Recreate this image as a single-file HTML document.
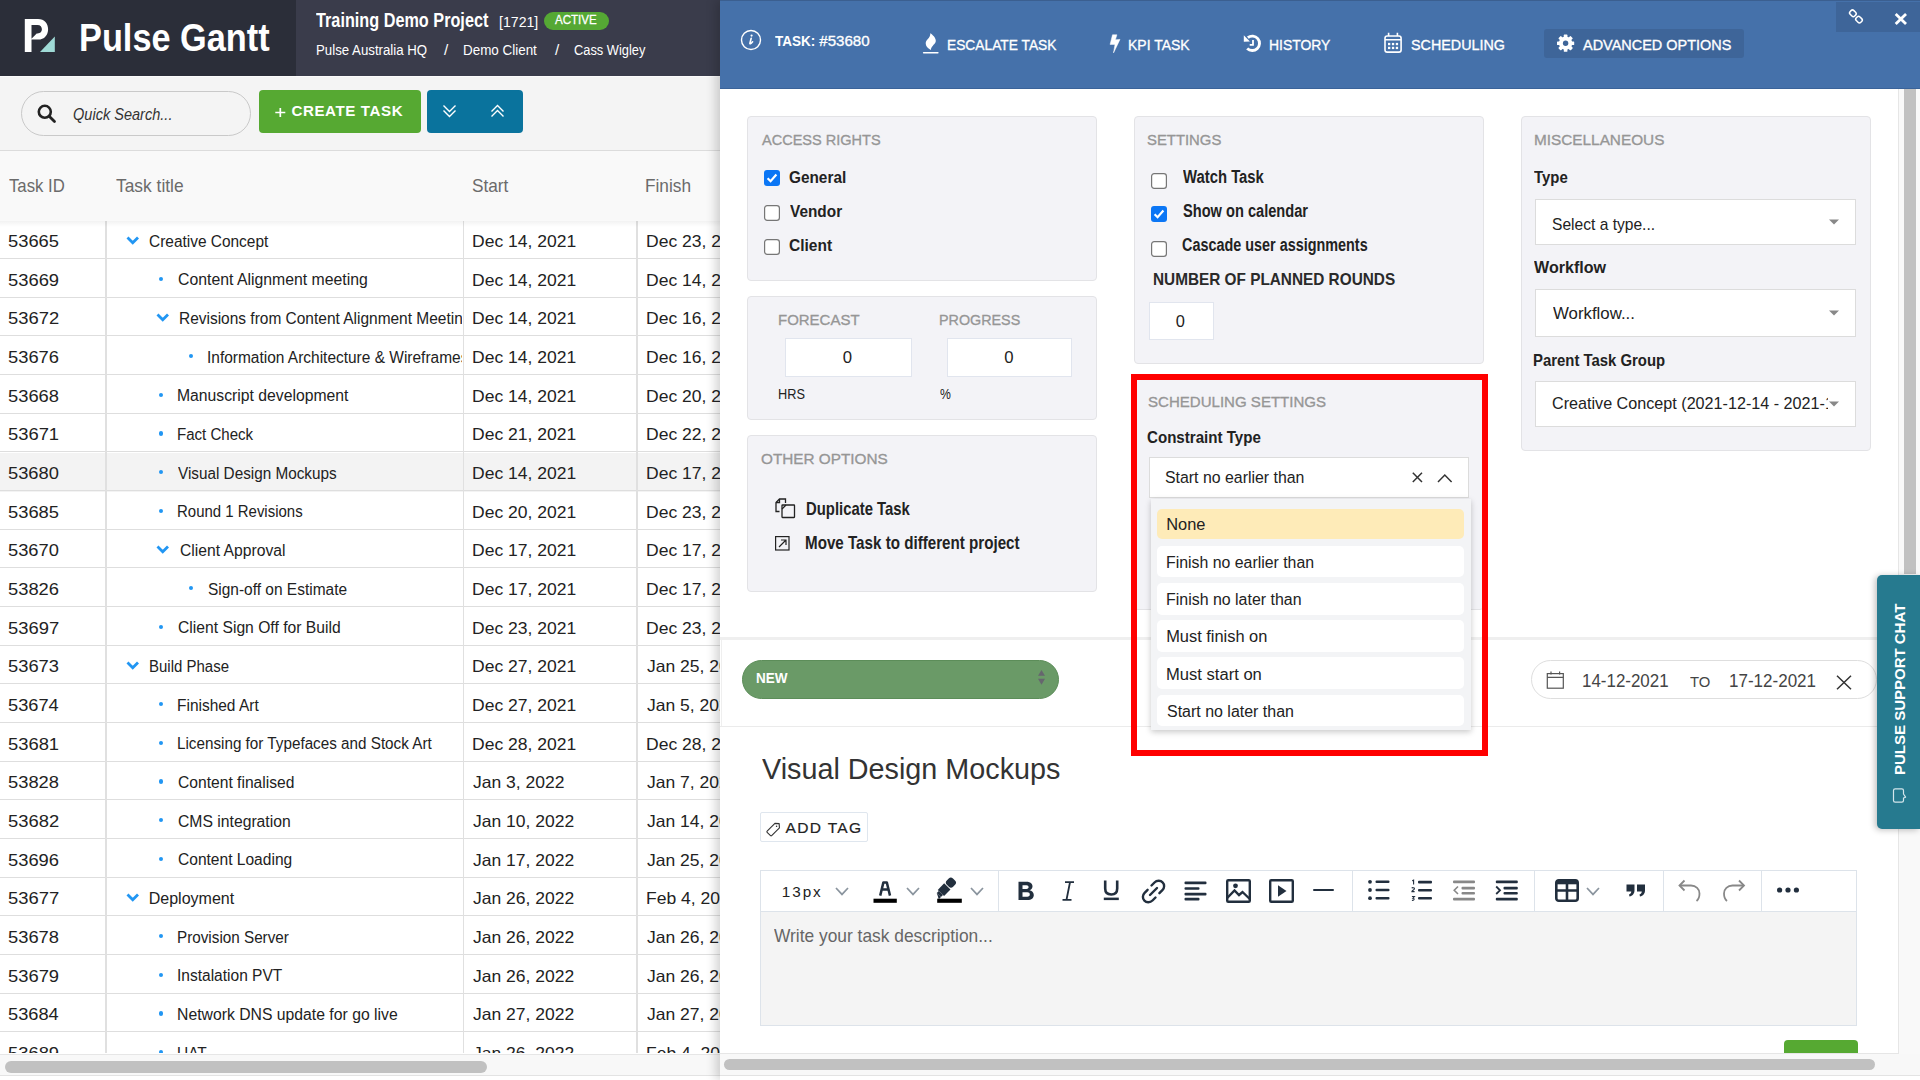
<!DOCTYPE html><html><head><meta charset="utf-8"><style>
html,body{margin:0;padding:0;width:1920px;height:1080px;overflow:hidden;background:#fff;font-family:"Liberation Sans",sans-serif;}
.t{position:absolute;line-height:1;white-space:nowrap;transform-origin:0 0;}
svg{overflow:visible}
</style></head><body>
<div style="position:absolute;left:0px;top:0px;width:296px;height:76px;background:#2b2e39"></div>
<div style="position:absolute;left:296px;top:0px;width:424px;height:76px;background:#3a3c4b"></div>
<svg style="position:absolute;left:20px;top:15px;" width="40" height="40" viewBox="0 0 40 40"><path d="M4.8 3.9H18C24.5 3.9 28.1 8.5 28.1 14.2C28.1 20 24.5 24.6 18 24.6H11.5V37H4.8Z M11.5 10H17.5C20.5 10 21.9 12 21.9 14.3C21.9 16.5 20.5 18.5 17.5 18.5H16.7L11.5 23.7Z" fill="#fff" fill-rule="evenodd"/><path d="M34.8 21.5V37H20Z" fill="#9fdad6"/></svg>
<div class="t" style="left:78.70px;top:17.78px;font-size:39.24px;font-weight:bold;font-style:normal;color:#fff;transform:scaleX(0.8745);">Pulse Gantt</div>
<div class="t" style="left:316.42px;top:10.64px;font-size:19.33px;font-weight:bold;font-style:normal;color:#fff;transform:scaleX(0.8402);">Training Demo Project</div>
<div class="t" style="left:498.70px;top:14.08px;font-size:15.26px;font-weight:normal;font-style:normal;color:#fff;transform:scaleX(0.9265);">[1721]</div>
<div style="position:absolute;left:544px;top:12px;width:65px;height:18px;background:#55a834;border-radius:9px"></div>
<div class="t" style="left:555.48px;top:14.25px;font-size:12.94px;font-weight:normal;font-style:normal;color:#fff;transform:scaleX(0.8929);-webkit-text-stroke:0.28px #fff;">ACTIVE</div>
<div class="t" style="left:315.51px;top:42.38px;font-size:15.26px;font-weight:normal;font-style:normal;color:#fff;transform:scaleX(0.8683);">Pulse Australia HQ</div>
<div class="t" style="left:444.00px;top:42.38px;font-size:15.26px;font-weight:normal;font-style:normal;color:#fff;">/</div>
<div class="t" style="left:462.90px;top:42.38px;font-size:15.26px;font-weight:normal;font-style:normal;color:#fff;transform:scaleX(0.8800);">Demo Client</div>
<div class="t" style="left:555.00px;top:42.38px;font-size:15.26px;font-weight:normal;font-style:normal;color:#fff;">/</div>
<div class="t" style="left:574.14px;top:42.38px;font-size:15.26px;font-weight:normal;font-style:normal;color:#fff;transform:scaleX(0.8417);">Cass Wigley</div>
<div style="position:absolute;left:0px;top:76px;width:720px;height:74px;background:#f4f4f4"></div>
<div style="position:absolute;left:0px;top:76px;width:720px;height:1px;background:#fbfbfb"></div>
<div style="position:absolute;left:0px;top:150px;width:720px;height:1px;background:#dcdcdc"></div>
<div style="position:absolute;left:21px;top:91px;width:230px;height:45px;box-sizing:border-box;border:1.5px solid #c9c9c9;border-radius:23px;background:#f4f4f4"></div>
<svg style="position:absolute;left:37px;top:104px;" width="20" height="20" viewBox="0 0 20 20"><circle cx="7.8" cy="7.8" r="6" fill="none" stroke="#222" stroke-width="2.6"/><path d="M12.2 12.2L17.5 17.5" stroke="#222" stroke-width="2.8" stroke-linecap="round"/></svg>
<div class="t" style="left:73.29px;top:106.85px;font-size:16.72px;font-weight:normal;font-style:italic;color:#333;transform:scaleX(0.8708);">Quick Search...</div>
<div style="position:absolute;left:259px;top:90px;width:162px;height:43px;background:#56a932;border-radius:4px"></div>
<svg style="position:absolute;left:274px;top:106px;" width="14" height="14" viewBox="0 0 14 14"><path d="M1.3 6.5H11.3M6.3 2V11" stroke="#fff" stroke-width="1.7"/></svg>
<div class="t" style="left:291.38px;top:103.00px;font-size:15.12px;font-weight:bold;font-style:normal;color:#fff;letter-spacing:0.610px;">CREATE TASK</div>
<div style="position:absolute;left:427px;top:90px;width:96px;height:43px;background:#0a739d;border-radius:4px"></div>
<svg style="position:absolute;left:442px;top:104px;" width="16" height="14" viewBox="0 0 16 14"><path d="M1.5 1.5L7.5 7.5L13.5 1.5M1.5 6.5L7.5 12.5L13.5 6.5" fill="none" stroke="#fff" stroke-width="1.4"/></svg>
<svg style="position:absolute;left:490px;top:104px;" width="16" height="14" viewBox="0 0 16 14"><path d="M1.5 7.5L7.5 1.5L13.5 7.5M1.5 12.5L7.5 6.5L13.5 12.5" fill="none" stroke="#fff" stroke-width="1.4"/></svg>
<div style="position:absolute;left:0px;top:151px;width:720px;height:70px;background:#f9f9f9"></div>
<div class="t" style="left:8.63px;top:177.05px;font-size:18.60px;font-weight:normal;font-style:normal;color:#6b6b6b;transform:scaleX(0.9008);">Task ID</div>
<div class="t" style="left:115.62px;top:177.05px;font-size:18.60px;font-weight:normal;font-style:normal;color:#6b6b6b;transform:scaleX(0.9347);">Task title</div>
<div class="t" style="left:472.47px;top:177.05px;font-size:18.60px;font-weight:normal;font-style:normal;color:#6b6b6b;transform:scaleX(0.9263);">Start</div>
<div class="t" style="left:645.38px;top:177.05px;font-size:18.60px;font-weight:normal;font-style:normal;color:#6b6b6b;transform:scaleX(0.9278);">Finish</div>
<div style="position:absolute;left:0;top:221px;width:720px;height:832px;overflow:hidden">
<div style="position:absolute;left:0px;top:37.00px;width:720px;height:1px;background:#dedede"></div>
<div class="t" style="left:8.27px;top:11.92px;font-size:16.28px;font-weight:normal;font-style:normal;color:#222;transform:scaleX(1.1266);">53665</div>
<svg style="position:absolute;left:126px;top:14.5px;" width="14" height="10" viewBox="0 0 14 10"><path d="M1.5 1.5L6.75 6.8L12 1.5" fill="none" stroke="#2196f3" stroke-width="2.8"/></svg>
<div style="position:absolute;left:0;top:0.00px;width:462px;height:38.667px;overflow:hidden">
<div class="t" style="left:149.21px;top:11.52px;font-size:16.05px;font-weight:normal;font-style:normal;color:#222;transform:scaleX(0.9631);">Creative Concept</div>
</div>
<div class="t" style="left:471.56px;top:11.92px;font-size:16.28px;font-weight:normal;font-style:normal;color:#222;transform:scaleX(1.0770);">Dec 14, 2021</div>
<div class="t" style="left:645.56px;top:11.92px;font-size:16.28px;font-weight:normal;font-style:normal;color:#222;transform:scaleX(1.0770);">Dec 23, 2021</div>
<div style="position:absolute;left:0px;top:75.66px;width:720px;height:1px;background:#dedede"></div>
<div class="t" style="left:8.27px;top:50.59px;font-size:16.28px;font-weight:normal;font-style:normal;color:#222;transform:scaleX(1.1287);">53669</div>
<div style="position:absolute;left:158.90px;top:55.70px;width:4.2px;height:4.2px;border-radius:50%;background:#2196f3"></div>
<div style="position:absolute;left:0;top:38.67px;width:462px;height:38.667px;overflow:hidden">
<div class="t" style="left:177.69px;top:11.52px;font-size:16.05px;font-weight:normal;font-style:normal;color:#222;transform:scaleX(0.9862);">Content Alignment meeting</div>
</div>
<div class="t" style="left:471.56px;top:50.59px;font-size:16.28px;font-weight:normal;font-style:normal;color:#222;transform:scaleX(1.0770);">Dec 14, 2021</div>
<div class="t" style="left:645.56px;top:50.59px;font-size:16.28px;font-weight:normal;font-style:normal;color:#222;transform:scaleX(1.0770);">Dec 14, 2021</div>
<div style="position:absolute;left:0px;top:114.33px;width:720px;height:1px;background:#dedede"></div>
<div class="t" style="left:8.26px;top:89.25px;font-size:16.28px;font-weight:normal;font-style:normal;color:#222;transform:scaleX(1.1300);">53672</div>
<svg style="position:absolute;left:156px;top:91.834px;" width="14" height="10" viewBox="0 0 14 10"><path d="M1.5 1.5L6.75 6.8L12 1.5" fill="none" stroke="#2196f3" stroke-width="2.8"/></svg>
<div style="position:absolute;left:0;top:77.33px;width:462px;height:38.667px;overflow:hidden">
<div class="t" style="left:179.13px;top:11.52px;font-size:16.05px;font-weight:normal;font-style:normal;color:#222;transform:scaleX(0.9650);">Revisions from Content Alignment Meeting</div>
</div>
<div class="t" style="left:471.56px;top:89.25px;font-size:16.28px;font-weight:normal;font-style:normal;color:#222;transform:scaleX(1.0770);">Dec 14, 2021</div>
<div class="t" style="left:645.56px;top:89.25px;font-size:16.28px;font-weight:normal;font-style:normal;color:#222;transform:scaleX(1.0770);">Dec 16, 2021</div>
<div style="position:absolute;left:0px;top:153.00px;width:720px;height:1px;background:#dedede"></div>
<div class="t" style="left:8.27px;top:127.92px;font-size:16.28px;font-weight:normal;font-style:normal;color:#222;transform:scaleX(1.1274);">53676</div>
<div style="position:absolute;left:188.50px;top:133.03px;width:4.2px;height:4.2px;border-radius:50%;background:#2196f3"></div>
<div style="position:absolute;left:0;top:116.00px;width:462px;height:38.667px;overflow:hidden">
<div class="t" style="left:207.48px;top:11.52px;font-size:16.05px;font-weight:normal;font-style:normal;color:#222;transform:scaleX(0.9650);">Information Architecture &amp; Wireframes</div>
</div>
<div class="t" style="left:471.56px;top:127.92px;font-size:16.28px;font-weight:normal;font-style:normal;color:#222;transform:scaleX(1.0770);">Dec 14, 2021</div>
<div class="t" style="left:645.56px;top:127.92px;font-size:16.28px;font-weight:normal;font-style:normal;color:#222;transform:scaleX(1.0770);">Dec 16, 2021</div>
<div style="position:absolute;left:0px;top:191.67px;width:720px;height:1px;background:#dedede"></div>
<div class="t" style="left:8.27px;top:166.59px;font-size:16.28px;font-weight:normal;font-style:normal;color:#222;transform:scaleX(1.1270);">53668</div>
<div style="position:absolute;left:158.90px;top:171.70px;width:4.2px;height:4.2px;border-radius:50%;background:#2196f3"></div>
<div style="position:absolute;left:0;top:154.67px;width:462px;height:38.667px;overflow:hidden">
<div class="t" style="left:177.21px;top:11.52px;font-size:16.05px;font-weight:normal;font-style:normal;color:#222;transform:scaleX(0.9816);">Manuscript development</div>
</div>
<div class="t" style="left:471.56px;top:166.59px;font-size:16.28px;font-weight:normal;font-style:normal;color:#222;transform:scaleX(1.0770);">Dec 14, 2021</div>
<div class="t" style="left:645.56px;top:166.59px;font-size:16.28px;font-weight:normal;font-style:normal;color:#222;transform:scaleX(1.0770);">Dec 20, 2021</div>
<div style="position:absolute;left:0px;top:230.33px;width:720px;height:1px;background:#dedede"></div>
<div class="t" style="left:8.26px;top:205.25px;font-size:16.28px;font-weight:normal;font-style:normal;color:#222;transform:scaleX(1.1295);">53671</div>
<div style="position:absolute;left:158.90px;top:210.37px;width:4.2px;height:4.2px;border-radius:50%;background:#2196f3"></div>
<div style="position:absolute;left:0;top:193.34px;width:462px;height:38.667px;overflow:hidden">
<div class="t" style="left:177.26px;top:11.52px;font-size:16.05px;font-weight:normal;font-style:normal;color:#222;transform:scaleX(0.9393);">Fact Check</div>
</div>
<div class="t" style="left:471.56px;top:205.25px;font-size:16.28px;font-weight:normal;font-style:normal;color:#222;transform:scaleX(1.0770);">Dec 21, 2021</div>
<div class="t" style="left:645.56px;top:205.25px;font-size:16.28px;font-weight:normal;font-style:normal;color:#222;transform:scaleX(1.0770);">Dec 22, 2021</div>
<div style="position:absolute;left:0px;top:232.00px;width:720px;height:38.667px;background:#f3f3f3"></div>
<div style="position:absolute;left:0px;top:269.00px;width:720px;height:1px;background:#dedede"></div>
<div class="t" style="left:8.27px;top:243.92px;font-size:16.28px;font-weight:normal;font-style:normal;color:#222;transform:scaleX(1.1254);">53680</div>
<div style="position:absolute;left:158.90px;top:249.04px;width:4.2px;height:4.2px;border-radius:50%;background:#2196f3"></div>
<div style="position:absolute;left:0;top:232.00px;width:462px;height:38.667px;overflow:hidden">
<div class="t" style="left:178.44px;top:11.52px;font-size:16.05px;font-weight:normal;font-style:normal;color:#222;transform:scaleX(0.9538);">Visual Design Mockups</div>
</div>
<div class="t" style="left:471.56px;top:243.92px;font-size:16.28px;font-weight:normal;font-style:normal;color:#222;transform:scaleX(1.0770);">Dec 14, 2021</div>
<div class="t" style="left:645.56px;top:243.92px;font-size:16.28px;font-weight:normal;font-style:normal;color:#222;transform:scaleX(1.0770);">Dec 17, 2021</div>
<div style="position:absolute;left:0px;top:307.67px;width:720px;height:1px;background:#dedede"></div>
<div class="t" style="left:8.27px;top:282.59px;font-size:16.28px;font-weight:normal;font-style:normal;color:#222;transform:scaleX(1.1266);">53685</div>
<div style="position:absolute;left:158.90px;top:287.70px;width:4.2px;height:4.2px;border-radius:50%;background:#2196f3"></div>
<div style="position:absolute;left:0;top:270.67px;width:462px;height:38.667px;overflow:hidden">
<div class="t" style="left:177.27px;top:11.52px;font-size:16.05px;font-weight:normal;font-style:normal;color:#222;transform:scaleX(0.9337);">Round 1 Revisions</div>
</div>
<div class="t" style="left:471.56px;top:282.59px;font-size:16.28px;font-weight:normal;font-style:normal;color:#222;transform:scaleX(1.0770);">Dec 20, 2021</div>
<div class="t" style="left:645.56px;top:282.59px;font-size:16.28px;font-weight:normal;font-style:normal;color:#222;transform:scaleX(1.0770);">Dec 23, 2021</div>
<div style="position:absolute;left:0px;top:346.33px;width:720px;height:1px;background:#dedede"></div>
<div class="t" style="left:8.27px;top:321.26px;font-size:16.28px;font-weight:normal;font-style:normal;color:#222;transform:scaleX(1.1254);">53670</div>
<svg style="position:absolute;left:156px;top:323.836px;" width="14" height="10" viewBox="0 0 14 10"><path d="M1.5 1.5L6.75 6.8L12 1.5" fill="none" stroke="#2196f3" stroke-width="2.8"/></svg>
<div style="position:absolute;left:0;top:309.34px;width:462px;height:38.667px;overflow:hidden">
<div class="t" style="left:179.60px;top:11.52px;font-size:16.05px;font-weight:normal;font-style:normal;color:#222;transform:scaleX(0.9780);">Client Approval</div>
</div>
<div class="t" style="left:471.56px;top:321.26px;font-size:16.28px;font-weight:normal;font-style:normal;color:#222;transform:scaleX(1.0770);">Dec 17, 2021</div>
<div class="t" style="left:645.56px;top:321.26px;font-size:16.28px;font-weight:normal;font-style:normal;color:#222;transform:scaleX(1.0770);">Dec 17, 2021</div>
<div style="position:absolute;left:0px;top:385.00px;width:720px;height:1px;background:#dedede"></div>
<div class="t" style="left:8.27px;top:359.92px;font-size:16.28px;font-weight:normal;font-style:normal;color:#222;transform:scaleX(1.1274);">53826</div>
<div style="position:absolute;left:188.50px;top:365.04px;width:4.2px;height:4.2px;border-radius:50%;background:#2196f3"></div>
<div style="position:absolute;left:0;top:348.00px;width:462px;height:38.667px;overflow:hidden">
<div class="t" style="left:208.20px;top:11.52px;font-size:16.05px;font-weight:normal;font-style:normal;color:#222;transform:scaleX(0.9652);">Sign-off on Estimate</div>
</div>
<div class="t" style="left:471.56px;top:359.92px;font-size:16.28px;font-weight:normal;font-style:normal;color:#222;transform:scaleX(1.0770);">Dec 17, 2021</div>
<div class="t" style="left:645.56px;top:359.92px;font-size:16.28px;font-weight:normal;font-style:normal;color:#222;transform:scaleX(1.0770);">Dec 17, 2021</div>
<div style="position:absolute;left:0px;top:423.67px;width:720px;height:1px;background:#dedede"></div>
<div class="t" style="left:8.26px;top:398.59px;font-size:16.28px;font-weight:normal;font-style:normal;color:#222;transform:scaleX(1.1300);">53697</div>
<div style="position:absolute;left:158.90px;top:403.70px;width:4.2px;height:4.2px;border-radius:50%;background:#2196f3"></div>
<div style="position:absolute;left:0;top:386.67px;width:462px;height:38.667px;overflow:hidden">
<div class="t" style="left:177.70px;top:11.52px;font-size:16.05px;font-weight:normal;font-style:normal;color:#222;transform:scaleX(0.9779);">Client Sign Off for Build</div>
</div>
<div class="t" style="left:471.56px;top:398.59px;font-size:16.28px;font-weight:normal;font-style:normal;color:#222;transform:scaleX(1.0770);">Dec 23, 2021</div>
<div class="t" style="left:645.56px;top:398.59px;font-size:16.28px;font-weight:normal;font-style:normal;color:#222;transform:scaleX(1.0770);">Dec 23, 2021</div>
<div style="position:absolute;left:0px;top:462.33px;width:720px;height:1px;background:#dedede"></div>
<div class="t" style="left:8.27px;top:437.26px;font-size:16.28px;font-weight:normal;font-style:normal;color:#222;transform:scaleX(1.1274);">53673</div>
<svg style="position:absolute;left:126px;top:439.837px;" width="14" height="10" viewBox="0 0 14 10"><path d="M1.5 1.5L6.75 6.8L12 1.5" fill="none" stroke="#2196f3" stroke-width="2.8"/></svg>
<div style="position:absolute;left:0;top:425.34px;width:462px;height:38.667px;overflow:hidden">
<div class="t" style="left:148.77px;top:11.52px;font-size:16.05px;font-weight:normal;font-style:normal;color:#222;transform:scaleX(0.9352);">Build Phase</div>
</div>
<div class="t" style="left:471.56px;top:437.26px;font-size:16.28px;font-weight:normal;font-style:normal;color:#222;transform:scaleX(1.0770);">Dec 27, 2021</div>
<div class="t" style="left:646.72px;top:437.26px;font-size:16.28px;font-weight:normal;font-style:normal;color:#222;transform:scaleX(1.0770);">Jan 25, 2022</div>
<div style="position:absolute;left:0px;top:501.00px;width:720px;height:1px;background:#dedede"></div>
<div class="t" style="left:8.27px;top:475.92px;font-size:16.28px;font-weight:normal;font-style:normal;color:#222;transform:scaleX(1.1212);">53674</div>
<div style="position:absolute;left:158.90px;top:481.04px;width:4.2px;height:4.2px;border-radius:50%;background:#2196f3"></div>
<div style="position:absolute;left:0;top:464.00px;width:462px;height:38.667px;overflow:hidden">
<div class="t" style="left:177.23px;top:11.52px;font-size:16.05px;font-weight:normal;font-style:normal;color:#222;transform:scaleX(0.9650);">Finished Art</div>
</div>
<div class="t" style="left:471.56px;top:475.92px;font-size:16.28px;font-weight:normal;font-style:normal;color:#222;transform:scaleX(1.0770);">Dec 27, 2021</div>
<div class="t" style="left:646.72px;top:475.92px;font-size:16.28px;font-weight:normal;font-style:normal;color:#222;transform:scaleX(1.0770);">Jan 5, 2022</div>
<div style="position:absolute;left:0px;top:539.67px;width:720px;height:1px;background:#dedede"></div>
<div class="t" style="left:8.26px;top:514.59px;font-size:16.28px;font-weight:normal;font-style:normal;color:#222;transform:scaleX(1.1295);">53681</div>
<div style="position:absolute;left:158.90px;top:519.70px;width:4.2px;height:4.2px;border-radius:50%;background:#2196f3"></div>
<div style="position:absolute;left:0;top:502.67px;width:462px;height:38.667px;overflow:hidden">
<div class="t" style="left:177.25px;top:11.52px;font-size:16.05px;font-weight:normal;font-style:normal;color:#222;transform:scaleX(0.9506);">Licensing for Typefaces and Stock Art</div>
</div>
<div class="t" style="left:471.56px;top:514.59px;font-size:16.28px;font-weight:normal;font-style:normal;color:#222;transform:scaleX(1.0770);">Dec 28, 2021</div>
<div class="t" style="left:645.56px;top:514.59px;font-size:16.28px;font-weight:normal;font-style:normal;color:#222;transform:scaleX(1.0770);">Dec 28, 2021</div>
<div style="position:absolute;left:0px;top:578.34px;width:720px;height:1px;background:#dedede"></div>
<div class="t" style="left:8.27px;top:553.26px;font-size:16.28px;font-weight:normal;font-style:normal;color:#222;transform:scaleX(1.1270);">53828</div>
<div style="position:absolute;left:158.90px;top:558.37px;width:4.2px;height:4.2px;border-radius:50%;background:#2196f3"></div>
<div style="position:absolute;left:0;top:541.34px;width:462px;height:38.667px;overflow:hidden">
<div class="t" style="left:177.70px;top:11.52px;font-size:16.05px;font-weight:normal;font-style:normal;color:#222;transform:scaleX(0.9746);">Content finalised</div>
</div>
<div class="t" style="left:472.72px;top:553.26px;font-size:16.28px;font-weight:normal;font-style:normal;color:#222;transform:scaleX(1.0770);">Jan 3, 2022</div>
<div class="t" style="left:646.72px;top:553.26px;font-size:16.28px;font-weight:normal;font-style:normal;color:#222;transform:scaleX(1.0770);">Jan 7, 2022</div>
<div style="position:absolute;left:0px;top:617.00px;width:720px;height:1px;background:#dedede"></div>
<div class="t" style="left:8.26px;top:591.92px;font-size:16.28px;font-weight:normal;font-style:normal;color:#222;transform:scaleX(1.1300);">53682</div>
<div style="position:absolute;left:158.90px;top:597.04px;width:4.2px;height:4.2px;border-radius:50%;background:#2196f3"></div>
<div style="position:absolute;left:0;top:580.00px;width:462px;height:38.667px;overflow:hidden">
<div class="t" style="left:177.70px;top:11.52px;font-size:16.05px;font-weight:normal;font-style:normal;color:#222;transform:scaleX(0.9806);">CMS integration</div>
</div>
<div class="t" style="left:472.72px;top:591.92px;font-size:16.28px;font-weight:normal;font-style:normal;color:#222;transform:scaleX(1.0770);">Jan 10, 2022</div>
<div class="t" style="left:646.72px;top:591.92px;font-size:16.28px;font-weight:normal;font-style:normal;color:#222;transform:scaleX(1.0770);">Jan 14, 2022</div>
<div style="position:absolute;left:0px;top:655.67px;width:720px;height:1px;background:#dedede"></div>
<div class="t" style="left:8.27px;top:630.59px;font-size:16.28px;font-weight:normal;font-style:normal;color:#222;transform:scaleX(1.1274);">53696</div>
<div style="position:absolute;left:158.90px;top:635.71px;width:4.2px;height:4.2px;border-radius:50%;background:#2196f3"></div>
<div style="position:absolute;left:0;top:618.67px;width:462px;height:38.667px;overflow:hidden">
<div class="t" style="left:177.71px;top:11.52px;font-size:16.05px;font-weight:normal;font-style:normal;color:#222;transform:scaleX(0.9705);">Content Loading</div>
</div>
<div class="t" style="left:472.72px;top:630.59px;font-size:16.28px;font-weight:normal;font-style:normal;color:#222;transform:scaleX(1.0770);">Jan 17, 2022</div>
<div class="t" style="left:646.72px;top:630.59px;font-size:16.28px;font-weight:normal;font-style:normal;color:#222;transform:scaleX(1.0770);">Jan 25, 2022</div>
<div style="position:absolute;left:0px;top:694.34px;width:720px;height:1px;background:#dedede"></div>
<div class="t" style="left:8.26px;top:669.26px;font-size:16.28px;font-weight:normal;font-style:normal;color:#222;transform:scaleX(1.1300);">53677</div>
<svg style="position:absolute;left:126px;top:671.839px;" width="14" height="10" viewBox="0 0 14 10"><path d="M1.5 1.5L6.75 6.8L12 1.5" fill="none" stroke="#2196f3" stroke-width="2.8"/></svg>
<div style="position:absolute;left:0;top:657.34px;width:462px;height:38.667px;overflow:hidden">
<div class="t" style="left:148.69px;top:11.52px;font-size:16.05px;font-weight:normal;font-style:normal;color:#222;">Deployment</div>
</div>
<div class="t" style="left:472.72px;top:669.26px;font-size:16.28px;font-weight:normal;font-style:normal;color:#222;transform:scaleX(1.0770);">Jan 26, 2022</div>
<div class="t" style="left:645.56px;top:669.26px;font-size:16.28px;font-weight:normal;font-style:normal;color:#222;transform:scaleX(1.0770);">Feb 4, 2022</div>
<div style="position:absolute;left:0px;top:733.00px;width:720px;height:1px;background:#dedede"></div>
<div class="t" style="left:8.27px;top:707.93px;font-size:16.28px;font-weight:normal;font-style:normal;color:#222;transform:scaleX(1.1270);">53678</div>
<div style="position:absolute;left:158.90px;top:713.04px;width:4.2px;height:4.2px;border-radius:50%;background:#2196f3"></div>
<div style="position:absolute;left:0;top:696.01px;width:462px;height:38.667px;overflow:hidden">
<div class="t" style="left:177.25px;top:11.52px;font-size:16.05px;font-weight:normal;font-style:normal;color:#222;transform:scaleX(0.9514);">Provision Server</div>
</div>
<div class="t" style="left:472.72px;top:707.93px;font-size:16.28px;font-weight:normal;font-style:normal;color:#222;transform:scaleX(1.0770);">Jan 26, 2022</div>
<div class="t" style="left:646.72px;top:707.93px;font-size:16.28px;font-weight:normal;font-style:normal;color:#222;transform:scaleX(1.0770);">Jan 26, 2022</div>
<div style="position:absolute;left:0px;top:771.67px;width:720px;height:1px;background:#dedede"></div>
<div class="t" style="left:8.27px;top:746.59px;font-size:16.28px;font-weight:normal;font-style:normal;color:#222;transform:scaleX(1.1287);">53679</div>
<div style="position:absolute;left:158.90px;top:751.71px;width:4.2px;height:4.2px;border-radius:50%;background:#2196f3"></div>
<div style="position:absolute;left:0;top:734.67px;width:462px;height:38.667px;overflow:hidden">
<div class="t" style="left:177.07px;top:11.52px;font-size:16.05px;font-weight:normal;font-style:normal;color:#222;transform:scaleX(0.9685);">Instalation PVT</div>
</div>
<div class="t" style="left:472.72px;top:746.59px;font-size:16.28px;font-weight:normal;font-style:normal;color:#222;transform:scaleX(1.0770);">Jan 26, 2022</div>
<div class="t" style="left:646.72px;top:746.59px;font-size:16.28px;font-weight:normal;font-style:normal;color:#222;transform:scaleX(1.0770);">Jan 26, 2022</div>
<div style="position:absolute;left:0px;top:810.34px;width:720px;height:1px;background:#dedede"></div>
<div class="t" style="left:8.27px;top:785.26px;font-size:16.28px;font-weight:normal;font-style:normal;color:#222;transform:scaleX(1.1212);">53684</div>
<div style="position:absolute;left:158.90px;top:790.37px;width:4.2px;height:4.2px;border-radius:50%;background:#2196f3"></div>
<div style="position:absolute;left:0;top:773.34px;width:462px;height:38.667px;overflow:hidden">
<div class="t" style="left:177.21px;top:11.52px;font-size:16.05px;font-weight:normal;font-style:normal;color:#222;transform:scaleX(0.9828);">Network DNS update for go live</div>
</div>
<div class="t" style="left:472.72px;top:785.26px;font-size:16.28px;font-weight:normal;font-style:normal;color:#222;transform:scaleX(1.0770);">Jan 27, 2022</div>
<div class="t" style="left:646.72px;top:785.26px;font-size:16.28px;font-weight:normal;font-style:normal;color:#222;transform:scaleX(1.0770);">Jan 27, 2022</div>
<div style="position:absolute;left:0px;top:849.00px;width:720px;height:1px;background:#dedede"></div>
<div class="t" style="left:8.27px;top:823.93px;font-size:16.28px;font-weight:normal;font-style:normal;color:#222;transform:scaleX(1.1287);">53689</div>
<div style="position:absolute;left:158.90px;top:829.04px;width:4.2px;height:4.2px;border-radius:50%;background:#2196f3"></div>
<div style="position:absolute;left:0;top:812.01px;width:462px;height:38.667px;overflow:hidden">
<div class="t" style="left:177.31px;top:11.52px;font-size:16.05px;font-weight:normal;font-style:normal;color:#222;transform:scaleX(0.9650);">UAT</div>
</div>
<div class="t" style="left:472.72px;top:823.93px;font-size:16.28px;font-weight:normal;font-style:normal;color:#222;transform:scaleX(1.0770);">Jan 26, 2022</div>
<div class="t" style="left:645.56px;top:823.93px;font-size:16.28px;font-weight:normal;font-style:normal;color:#222;transform:scaleX(1.0770);">Feb 4, 2022</div>
</div>
<div style="position:absolute;left:105px;top:221px;width:1.5px;height:832px;background:#e0e0e0"></div>
<div style="position:absolute;left:462.5px;top:221px;width:1.5px;height:832px;background:#e0e0e0"></div>
<div style="position:absolute;left:636px;top:221px;width:1.5px;height:832px;background:#e0e0e0"></div>
<div style="position:absolute;left:0px;top:221px;width:720px;height:6px;background:linear-gradient(#0000000d,#0000)"></div>
<div style="position:absolute;left:0px;top:1053.5px;width:720px;height:22.5px;background:#f8f8f8;border-top:1px solid #e6e6e6;border-bottom:1px solid #e3e3e3;box-sizing:border-box"></div>
<div style="position:absolute;left:0px;top:1076px;width:720px;height:4px;background:#fff"></div>
<div style="position:absolute;left:4.5px;top:1061px;width:482px;height:11.5px;background:#c1c1c1;border-radius:6px"></div>
<div style="position:absolute;left:720px;top:0;width:1200px;height:1080px;background:#fff;box-shadow:-4px 0 10px rgba(0,0,0,.18)"></div>
<div style="position:absolute;left:720px;top:0px;width:1200px;height:88.5px;background:#4571aa"></div>
<div style="position:absolute;left:720px;top:87.5px;width:1200px;height:1.2px;background:#3a6399"></div>
<div style="position:absolute;left:720px;top:0px;width:1200px;height:1px;background:#3b5f90"></div>
<svg style="position:absolute;left:736px;top:25px;" width="30" height="30" viewBox="0 0 30 30"><circle cx="15" cy="15" r="9.5" fill="none" stroke="#fff" stroke-width="1.4"/><circle cx="15.6" cy="10.6" r="1.1" fill="#fff"/><path d="M15.2 13.2L13.9 18.2C13.7 19 14.6 19.2 16.6 16.8" fill="none" stroke="#fff" stroke-width="1.6" stroke-linecap="round"/></svg>
<div class="t" style="left:774.85px;top:33.20px;font-size:15.12px;font-weight:bold;font-style:normal;color:#fff;transform:scaleX(0.8931);">TASK:</div>
<div class="t" style="left:819.24px;top:33.20px;font-size:15.12px;font-weight:normal;font-style:normal;color:#fff;-webkit-text-stroke:0.33px #fff;">#53680</div>
<svg style="position:absolute;left:915px;top:28px;" width="30" height="30" viewBox="0 0 30 30"><path d="M15.3 5.3C17.5 6.8 20.8 9.5 20.8 12.8C20.8 16 16.5 17.5 15.8 21.9C12.5 20.5 10.7 18 10.7 15.3C10.7 11.5 15.5 10.5 15.3 5.3Z" fill="#fff"/><rect x="7.9" y="23.9" width="15.7" height="1.5" rx="0.7" fill="#fff"/></svg>
<div class="t" style="left:947.27px;top:36.80px;font-size:15.12px;font-weight:normal;font-style:normal;color:#fff;transform:scaleX(0.9115);-webkit-text-stroke:0.33px #fff;">ESCALATE TASK</div>
<svg style="position:absolute;left:1100px;top:28px;" width="30" height="30" viewBox="0 0 30 30"><path d="M12.5 6.8L16.9 6.8L15.4 11.8L20 11.4L13.5 24.9L15 16.4L10.1 16.4Z" fill="#fff" stroke="#fff" stroke-width="0.5" stroke-linejoin="round"/></svg>
<div class="t" style="left:1128.45px;top:36.90px;font-size:15.12px;font-weight:normal;font-style:normal;color:#fff;transform:scaleX(0.9260);-webkit-text-stroke:0.33px #fff;">KPI TASK</div>
<svg style="position:absolute;left:1238px;top:28px;" width="30" height="30" viewBox="0 0 30 30"><path d="M9.84 9.68A7.2 7.2 0 1 1 9.2 20.4" fill="none" stroke="#fff" stroke-width="2.9"/><path d="M5.8 7.2L5.8 13.75L11.9 13.6Z" fill="#fff"/><path d="M15 11.9V16.8H11.7" fill="none" stroke="#fff" stroke-width="1.8"/></svg>
<div class="t" style="left:1269.46px;top:36.90px;font-size:15.12px;font-weight:normal;font-style:normal;color:#fff;transform:scaleX(0.9220);-webkit-text-stroke:0.33px #fff;">HISTORY</div>
<svg style="position:absolute;left:1378px;top:28px;" width="30" height="30" viewBox="0 0 30 30"><rect x="7" y="8" width="16.1" height="16.1" rx="2.2" fill="none" stroke="#fff" stroke-width="1.6"/><path d="M7 11.7H23.1M10.6 4.7V8M19.4 4.7V8" stroke="#fff" stroke-width="1.6"/><g fill="#fff"><rect x="10" y="14.9" width="2.3" height="2.3"/><rect x="13.9" y="14.9" width="2.3" height="2.3"/><rect x="17.8" y="14.9" width="2.3" height="2.3"/><rect x="10" y="18.8" width="2.3" height="2.3"/><rect x="13.9" y="18.8" width="2.3" height="2.3"/><rect x="17.8" y="18.8" width="2.3" height="2.3"/></g></svg>
<div class="t" style="left:1410.65px;top:36.90px;font-size:15.12px;font-weight:normal;font-style:normal;color:#fff;transform:scaleX(0.9486);-webkit-text-stroke:0.33px #fff;">SCHEDULING</div>
<div style="position:absolute;left:1544px;top:28.5px;width:200px;height:29px;background:#3e6599;border-radius:3px"></div>
<svg style="position:absolute;left:1550px;top:28px;" width="30" height="30" viewBox="0 0 30 30"><g transform="translate(15.6,15.2)"><circle r="6.6" fill="#fff"/><rect x="-1.8" y="-8.6" width="3.6" height="4" rx="0.6" fill="#fff" transform="rotate(0)"/><rect x="-1.8" y="-8.6" width="3.6" height="4" rx="0.6" fill="#fff" transform="rotate(45)"/><rect x="-1.8" y="-8.6" width="3.6" height="4" rx="0.6" fill="#fff" transform="rotate(90)"/><rect x="-1.8" y="-8.6" width="3.6" height="4" rx="0.6" fill="#fff" transform="rotate(135)"/><rect x="-1.8" y="-8.6" width="3.6" height="4" rx="0.6" fill="#fff" transform="rotate(180)"/><rect x="-1.8" y="-8.6" width="3.6" height="4" rx="0.6" fill="#fff" transform="rotate(225)"/><rect x="-1.8" y="-8.6" width="3.6" height="4" rx="0.6" fill="#fff" transform="rotate(270)"/><rect x="-1.8" y="-8.6" width="3.6" height="4" rx="0.6" fill="#fff" transform="rotate(315)"/><circle r="2.7" fill="#3e6599"/></g></svg>
<div class="t" style="left:1582.97px;top:36.90px;font-size:15.12px;font-weight:normal;font-style:normal;color:#fff;transform:scaleX(0.9567);-webkit-text-stroke:0.33px #fff;">ADVANCED OPTIONS</div>
<div style="position:absolute;left:1836px;top:2px;width:84px;height:30px;background:#3e6599"></div>
<svg style="position:absolute;left:1840px;top:0px;" width="40" height="40" viewBox="0 0 40 40"><g fill="none" stroke="#fff" stroke-width="1.5"><rect x="-3.2" y="-2.6" width="6.4" height="5.2" rx="2" transform="translate(12.9 13.3) rotate(45)"/><rect x="-3.2" y="-2.6" width="6.4" height="5.2" rx="2" transform="translate(19 19.6) rotate(45)"/></g></svg>
<svg style="position:absolute;left:1890px;top:9px;" width="20" height="20" viewBox="0 0 20 20"><path d="M6.7 6L15 14M15 6L6.7 14" stroke="#fff" stroke-width="2.8" stroke-linecap="square"/></svg>
<div style="position:absolute;left:720px;top:636.5px;width:1178px;height:3px;background:#efefef"></div>
<div style="position:absolute;left:720px;top:726px;width:1178px;height:1.2px;background:#ebebeb"></div>
<div style="position:absolute;left:720.5px;top:639px;width:1px;height:87px;background:#efefef"></div>
<div style="position:absolute;left:742.2px;top:659.6px;width:316.7px;height:39.3px;background:#6a9a67;border:1px solid #5c8d59;box-sizing:border-box;border-radius:20px"></div>
<div class="t" style="left:755.79px;top:670.26px;font-size:15.41px;font-weight:bold;font-style:normal;color:#fff;transform:scaleX(0.8769);">NEW</div>
<svg style="position:absolute;left:1030px;top:660px;" width="20" height="30" viewBox="0 0 20 30"><path d="M8 15.7L11.5 9.9L15 15.7Z M8 18.7L11.5 24.7L15 18.7Z" fill="#66666e"/></svg>
<div style="position:absolute;left:1530.7px;top:660px;width:346px;height:39px;border:1px solid #dedede;border-radius:20px;box-sizing:border-box;background:#fff"></div>
<svg style="position:absolute;left:1546px;top:671px;" width="19" height="18" viewBox="0 0 19 18"><g fill="none" stroke="#555" stroke-width="1.2"><rect x="1.3" y="2.6" width="16" height="14.6"/><path d="M1.3 6.3H17.3M5 0.5V3.5M13.6 0.5V3.5"/></g></svg>
<div class="t" style="left:1582.01px;top:671.81px;font-size:18.90px;font-weight:normal;font-style:normal;color:#444;transform:scaleX(0.8962);">14-12-2021</div>
<div class="t" style="left:1689.67px;top:676.11px;font-size:13.81px;font-weight:normal;font-style:normal;color:#444;transform:scaleX(1.0743);">TO</div>
<div class="t" style="left:1729.41px;top:671.81px;font-size:18.90px;font-weight:normal;font-style:normal;color:#444;transform:scaleX(0.9004);">17-12-2021</div>
<svg style="position:absolute;left:1836px;top:674.5px;" width="16" height="15" viewBox="0 0 16 15"><path d="M1 0.8L15 14.2M15 0.8L1 14.2" stroke="#333" stroke-width="1.5"/></svg>
<div style="position:absolute;left:747px;top:116px;width:350px;height:164.5px;background:#f3f3f7;border:1px solid #e3e3e6;border-radius:4px;box-sizing:border-box"></div>
<div style="position:absolute;left:747px;top:295.5px;width:350px;height:124.5px;background:#f3f3f7;border:1px solid #e3e3e6;border-radius:4px;box-sizing:border-box"></div>
<div style="position:absolute;left:747px;top:434.5px;width:350px;height:157.5px;background:#f3f3f7;border:1px solid #e3e3e6;border-radius:4px;box-sizing:border-box"></div>
<div style="position:absolute;left:1134px;top:116px;width:350px;height:247.5px;background:#f3f3f7;border:1px solid #e3e3e6;border-radius:4px;box-sizing:border-box"></div>
<div style="position:absolute;left:1134px;top:378px;width:350px;height:231.5px;background:#f3f3f7;border:1px solid #e3e3e6;border-radius:4px;box-sizing:border-box"></div>
<div style="position:absolute;left:1520.5px;top:116px;width:350px;height:334.5px;background:#f3f3f7;border:1px solid #e3e3e6;border-radius:4px;box-sizing:border-box"></div>
<div class="t" style="left:761.97px;top:131.83px;font-size:15.55px;font-weight:normal;font-style:normal;color:#969696;transform:scaleX(0.9344);-webkit-text-stroke:0.34px #969696;">ACCESS RIGHTS</div>
<svg style="position:absolute;left:764px;top:170px;" width="16" height="16" viewBox="0 0 16 16"><rect x="0" y="0" width="16" height="16" rx="3" fill="#0b76f5"/><path d="M3.6 8.2L6.6 11.2L12.4 4.6" fill="none" stroke="#fff" stroke-width="2.2"/></svg>
<svg style="position:absolute;left:764px;top:204.5px;" width="16" height="16" viewBox="0 0 16 16"><rect x="0.6" y="0.6" width="14.8" height="14.8" rx="2.6" fill="#fff" stroke="#767676" stroke-width="1.2"/></svg>
<svg style="position:absolute;left:764px;top:239px;" width="16" height="16" viewBox="0 0 16 16"><rect x="0.6" y="0.6" width="14.8" height="14.8" rx="2.6" fill="#fff" stroke="#767676" stroke-width="1.2"/></svg>
<div class="t" style="left:789.37px;top:169.97px;font-size:15.99px;font-weight:bold;font-style:normal;color:#222;transform:scaleX(0.9610);">General</div>
<div class="t" style="left:789.89px;top:204.07px;font-size:15.99px;font-weight:bold;font-style:normal;color:#222;transform:scaleX(0.9620);">Vendor</div>
<div class="t" style="left:789.36px;top:238.17px;font-size:15.99px;font-weight:bold;font-style:normal;color:#222;transform:scaleX(0.9709);">Client</div>
<div class="t" style="left:777.77px;top:311.83px;font-size:15.55px;font-weight:normal;font-style:normal;color:#969696;transform:scaleX(0.9633);-webkit-text-stroke:0.34px #969696;">FORECAST</div>
<div class="t" style="left:938.82px;top:311.83px;font-size:15.55px;font-weight:normal;font-style:normal;color:#969696;transform:scaleX(0.9215);-webkit-text-stroke:0.34px #969696;">PROGRESS</div>
<div style="position:absolute;left:785px;top:338px;width:127px;height:39px;background:#fff;border:1px solid #e1e5ee;box-sizing:border-box"></div>
<div style="position:absolute;left:947px;top:338px;width:125px;height:39px;background:#fff;border:1px solid #e1e5ee;box-sizing:border-box"></div>
<div class="t" style="left:842.85px;top:350.05px;font-size:16.72px;font-weight:normal;font-style:normal;color:#222;">0</div>
<div class="t" style="left:1004.15px;top:350.05px;font-size:16.72px;font-weight:normal;font-style:normal;color:#222;">0</div>
<div class="t" style="left:777.95px;top:386.20px;font-size:15.12px;font-weight:normal;font-style:normal;color:#222;transform:scaleX(0.8440);">HRS</div>
<div class="t" style="left:939.56px;top:386.20px;font-size:15.12px;font-weight:normal;font-style:normal;color:#222;transform:scaleX(0.8087);">%</div>
<div class="t" style="left:761.28px;top:451.03px;font-size:15.55px;font-weight:normal;font-style:normal;color:#969696;transform:scaleX(0.9851);-webkit-text-stroke:0.34px #969696;">OTHER OPTIONS</div>
<svg style="position:absolute;left:775px;top:498px;" width="21" height="21" viewBox="0 0 21 21"><g fill="none" stroke="#222" stroke-width="1.3"><path d="M4.5 13.5H1V4.5L4.5 1H10.5V5"/><path d="M4.5 1V4.5H1"/><rect x="7" y="7" width="12.5" height="12.5" rx="0.5"/><path d="M7 11L11 7"/></g></svg>
<div class="t" style="left:805.50px;top:501.11px;font-size:17.59px;font-weight:bold;font-style:normal;color:#222;transform:scaleX(0.8457);">Duplicate Task</div>
<svg style="position:absolute;left:775px;top:536px;" width="15" height="15" viewBox="0 0 15 15"><g fill="none" stroke="#222" stroke-width="1.2"><rect x="0.6" y="0.6" width="13.4" height="13.4"/><path d="M4 11L11 4M6 4H11V9"/></g></svg>
<div class="t" style="left:805.48px;top:535.41px;font-size:17.59px;font-weight:bold;font-style:normal;color:#222;transform:scaleX(0.8627);">Move Task to different project</div>
<div class="t" style="left:1147.33px;top:132.03px;font-size:15.55px;font-weight:normal;font-style:normal;color:#969696;transform:scaleX(0.9560);-webkit-text-stroke:0.34px #969696;">SETTINGS</div>
<svg style="position:absolute;left:1150.5px;top:172.5px;" width="16" height="16" viewBox="0 0 16 16"><rect x="0.6" y="0.6" width="14.8" height="14.8" rx="2.6" fill="#fff" stroke="#767676" stroke-width="1.2"/></svg>
<svg style="position:absolute;left:1150.5px;top:206.3px;" width="16" height="16" viewBox="0 0 16 16"><rect x="0" y="0" width="16" height="16" rx="3" fill="#0b76f5"/><path d="M3.6 8.2L6.6 11.2L12.4 4.6" fill="none" stroke="#fff" stroke-width="2.2"/></svg>
<svg style="position:absolute;left:1150.5px;top:240.5px;" width="16" height="16" viewBox="0 0 16 16"><rect x="0.6" y="0.6" width="14.8" height="14.8" rx="2.6" fill="#fff" stroke="#767676" stroke-width="1.2"/></svg>
<div class="t" style="left:1182.99px;top:169.44px;font-size:17.44px;font-weight:bold;font-style:normal;color:#222;transform:scaleX(0.8517);">Watch Task</div>
<div class="t" style="left:1182.58px;top:203.24px;font-size:17.44px;font-weight:bold;font-style:normal;color:#222;transform:scaleX(0.8378);">Show on calendar</div>
<div class="t" style="left:1182.41px;top:236.84px;font-size:17.44px;font-weight:bold;font-style:normal;color:#222;transform:scaleX(0.8256);">Cascade user assignments</div>
<div class="t" style="left:1152.67px;top:271.83px;font-size:16.86px;font-weight:bold;font-style:normal;color:#2a2a2a;transform:scaleX(0.9102);">NUMBER OF PLANNED ROUNDS</div>
<div style="position:absolute;left:1148.5px;top:301.5px;width:65.5px;height:38.5px;background:#fff;border:1px solid #e1e5ee;box-sizing:border-box"></div>
<div class="t" style="left:1175.86px;top:313.40px;font-size:16.42px;font-weight:normal;font-style:normal;color:#222;">0</div>
<div class="t" style="left:1147.52px;top:394.23px;font-size:15.55px;font-weight:normal;font-style:normal;color:#969696;transform:scaleX(0.9680);-webkit-text-stroke:0.34px #969696;">SCHEDULING SETTINGS</div>
<div class="t" style="left:1147.38px;top:428.66px;font-size:17.30px;font-weight:bold;font-style:normal;color:#222;transform:scaleX(0.8740);">Constraint Type</div>
<div style="position:absolute;left:1148.5px;top:456.7px;width:320.5px;height:41.6px;background:#fff;border:1px solid #dcdcdc;box-sizing:border-box"></div>
<div class="t" style="left:1165.09px;top:470.33px;font-size:16.86px;font-weight:normal;font-style:normal;color:#222;transform:scaleX(0.9417);">Start no earlier than</div>
<svg style="position:absolute;left:1412px;top:472px;" width="11" height="11" viewBox="0 0 11 11"><path d="M0.8 0.8L10 10M10 0.8L0.8 10" stroke="#333" stroke-width="1.5"/></svg>
<svg style="position:absolute;left:1437px;top:473px;" width="16" height="10" viewBox="0 0 16 10"><path d="M1 9L7.8 2L14.6 9" fill="none" stroke="#333" stroke-width="1.5"/></svg>
<div style="position:absolute;left:1150.5px;top:499.4px;width:320.3px;height:231.1px;background:#f3f4f6;box-shadow:0 2px 6px rgba(0,0,0,.22)"></div>
<div style="position:absolute;left:1157px;top:508.7px;width:306.7px;height:30.19999999999999px;background:#feebb8;border-radius:5px"></div>
<div class="t" style="left:1166.16px;top:516.30px;font-size:16.42px;font-weight:normal;font-style:normal;color:#222;">None</div>
<div style="position:absolute;left:1157px;top:545.9px;width:306.7px;height:30.700000000000045px;background:#fff;border-radius:5px"></div>
<div class="t" style="left:1166.20px;top:554.00px;font-size:16.42px;font-weight:normal;font-style:normal;color:#222;transform:scaleX(0.9665);">Finish no earlier than</div>
<div style="position:absolute;left:1157px;top:583px;width:306.7px;height:31.700000000000045px;background:#fff;border-radius:5px"></div>
<div class="t" style="left:1166.19px;top:590.80px;font-size:16.42px;font-weight:normal;font-style:normal;color:#222;transform:scaleX(0.9710);">Finish no later than</div>
<div style="position:absolute;left:1157px;top:619.7px;width:306.7px;height:32.0px;background:#fff;border-radius:5px"></div>
<div class="t" style="left:1166.15px;top:627.70px;font-size:16.42px;font-weight:normal;font-style:normal;color:#222;">Must finish on</div>
<div style="position:absolute;left:1157px;top:656.7px;width:306.7px;height:32.5px;background:#fff;border-radius:5px"></div>
<div class="t" style="left:1166.14px;top:666.00px;font-size:16.42px;font-weight:normal;font-style:normal;color:#222;transform:scaleX(1.0106);">Must start on</div>
<div style="position:absolute;left:1157px;top:695px;width:306.7px;height:30.799999999999955px;background:#fff;border-radius:5px"></div>
<div class="t" style="left:1166.78px;top:702.80px;font-size:16.42px;font-weight:normal;font-style:normal;color:#222;transform:scaleX(0.9732);">Start no later than</div>
<div style="position:absolute;left:1130.5px;top:374px;width:357px;height:382px;border:6px solid #ff0000;box-sizing:border-box"></div>
<div class="t" style="left:1533.54px;top:131.83px;font-size:15.55px;font-weight:normal;font-style:normal;color:#969696;transform:scaleX(0.9866);-webkit-text-stroke:0.34px #969696;">MISCELLANEOUS</div>
<div class="t" style="left:1534.14px;top:169.35px;font-size:17.01px;font-weight:bold;font-style:normal;color:#222;transform:scaleX(0.8787);">Type</div>
<div class="t" style="left:1534.28px;top:259.40px;font-size:17.01px;font-weight:bold;font-style:normal;color:#222;transform:scaleX(0.9457);">Workflow</div>
<div class="t" style="left:1533.30px;top:351.80px;font-size:17.01px;font-weight:bold;font-style:normal;color:#222;transform:scaleX(0.8762);">Parent Task Group</div>
<div style="position:absolute;left:1535.2px;top:199.2px;width:320.6px;height:45.80000000000001px;background:#fff;border:1px solid #dcdcdc;box-sizing:border-box"></div>
<div style="position:absolute;left:1536px;top:199.2px;width:292px;height:45.80000000000001px;overflow:hidden">
<div class="t" style="left:16.30px;top:16.40px;font-size:17.01px;font-weight:normal;font-style:normal;color:#222;transform:scaleX(0.9167);">Select a type...</div>
</div>
<svg style="position:absolute;left:1829px;top:219.1px;" width="10" height="6" viewBox="0 0 10 6"><path d="M0 0.5H10L5 5.5Z" fill="#888"/></svg>
<div style="position:absolute;left:1535.2px;top:289.2px;width:320.6px;height:47.5px;background:#fff;border:1px solid #dcdcdc;box-sizing:border-box"></div>
<div style="position:absolute;left:1536px;top:289.2px;width:292px;height:47.5px;overflow:hidden">
<div class="t" style="left:16.93px;top:16.00px;font-size:17.01px;font-weight:normal;font-style:normal;color:#222;transform:scaleX(0.9897);">Workflow...</div>
</div>
<svg style="position:absolute;left:1829px;top:309.95px;" width="10" height="6" viewBox="0 0 10 6"><path d="M0 0.5H10L5 5.5Z" fill="#888"/></svg>
<div style="position:absolute;left:1535.2px;top:381.2px;width:320.6px;height:45.5px;background:#fff;border:1px solid #dcdcdc;box-sizing:border-box"></div>
<div style="position:absolute;left:1536px;top:381.2px;width:292px;height:45.5px;overflow:hidden">
<div class="t" style="left:16.18px;top:14.00px;font-size:17.01px;font-weight:normal;font-style:normal;color:#222;transform:scaleX(0.9500);">Creative Concept (2021-12-14 - 2021-12-23)</div>
</div>
<svg style="position:absolute;left:1829px;top:400.95px;" width="10" height="6" viewBox="0 0 10 6"><path d="M0 0.5H10L5 5.5Z" fill="#888"/></svg>
<div class="t" style="left:762.08px;top:754.13px;font-size:30.09px;font-weight:normal;font-style:normal;color:#333;transform:scaleX(0.9563);">Visual Design Mockups</div>
<div style="position:absolute;left:760.4px;top:812.2px;width:107.4px;height:30px;border:1px solid #dfe6ee;border-radius:2px;box-sizing:border-box;background:#fff"></div>
<svg style="position:absolute;left:760px;top:810px;" width="40" height="35" viewBox="0 0 40 35"><g transform="translate(14.2 18.6) rotate(-45)"><path d="M-6.8 -3.2H4.2L7 0L4.2 3.2H-6.8Q-7.6 3.2 -7.6 2.4V-2.4Q-7.6 -3.2 -6.8 -3.2Z" fill="none" stroke="#333" stroke-width="1.1" stroke-linejoin="round"/><circle cx="3.4" cy="0" r="0.75" fill="#333"/></g></svg>
<div class="t" style="left:785.57px;top:819.73px;font-size:15.55px;font-weight:normal;font-style:normal;color:#222;-webkit-text-stroke:0.2px #222;letter-spacing:1.316px;">ADD TAG</div>
<div style="position:absolute;left:760.3px;top:870.3px;width:1097.2px;height:156px;border:1px solid #dde3ea;box-sizing:border-box;background:#f4f4f4"></div>
<div style="position:absolute;left:761.3px;top:871.3px;width:1095.2px;height:40.3px;background:#fff;border-bottom:1px solid #dde3ea;box-sizing:border-box"></div>
<div class="t" style="left:781.84px;top:883.98px;font-size:15.26px;font-weight:normal;font-style:normal;color:#222;letter-spacing:1.947px;">13px</div>
<svg style="position:absolute;left:835px;top:886.9px;" width="14" height="9" viewBox="0 0 14 9"><path d="M1 1L7 7.4L13 1" fill="none" stroke="#8a949e" stroke-width="1.7"/></svg>
<svg style="position:absolute;left:905.6px;top:886.9px;" width="14" height="9" viewBox="0 0 14 9"><path d="M1 1L7 7.4L13 1" fill="none" stroke="#8a949e" stroke-width="1.7"/></svg>
<svg style="position:absolute;left:969.7px;top:886.9px;" width="14" height="9" viewBox="0 0 14 9"><path d="M1 1L7 7.4L13 1" fill="none" stroke="#8a949e" stroke-width="1.7"/></svg>
<div style="position:absolute;left:997.8px;top:871.3px;width:1px;height:40.3px;background:#dde3ea"></div>
<div style="position:absolute;left:1351.9px;top:871.3px;width:1px;height:40.3px;background:#dde3ea"></div>
<div style="position:absolute;left:1534px;top:871.3px;width:1px;height:40.3px;background:#dde3ea"></div>
<div style="position:absolute;left:1663px;top:871.3px;width:1px;height:40.3px;background:#dde3ea"></div>
<div style="position:absolute;left:1760.6px;top:871.3px;width:1px;height:40.3px;background:#dde3ea"></div>
<svg style="position:absolute;left:865px;top:872px;" width="40" height="34" viewBox="0 0 40 34"><path d="M15.2 23.6L18.4 10.4H21.8L25 23.6M16.6 17.6H23.6" fill="none" stroke="#222f3e" stroke-width="2.5" stroke-linejoin="round"/><rect x="8.5" y="26.7" width="23.3" height="4.1" fill="#000"/></svg>
<svg style="position:absolute;left:865px;top:872px;" width="40" height="34" viewBox="0 0 40 34"><g transform="translate(80.5 16.2) rotate(-46)" fill="#222f3e"><rect x="3.4" y="-4.4" width="8.8" height="8.8" rx="3"/><rect x="-6.6" y="-4.4" width="9.2" height="8.8"/><path d="M-6.6 -2.9H-9.6V2.9H-6.6Z"/><path d="M-9.6 -2.9L-12.6 2.9H-9.6Z"/></g><rect x="72.2" y="26.7" width="24.6" height="4.1" fill="#000"/></svg>
<svg style="position:absolute;left:1017px;top:881px;" width="18" height="20" viewBox="0 0 18 20"><path d="M1.5 0.8H9.5C13.5 0.8 15.5 3 15.5 5.5C15.5 7.5 14 8.8 12.5 9.3C14.8 9.8 16.8 11.5 16.8 14C16.8 17 14.5 19 10.5 19H1.5Z M5.5 4.2V8H9.5C11 8 11.6 7 11.6 6.1C11.6 5 10.9 4.2 9.5 4.2Z M5.5 11.3V15.7H10.2C12 15.7 12.8 14.8 12.8 13.5C12.8 12.2 12 11.3 10.2 11.3Z" fill="#222f3e" fill-rule="evenodd"/></svg>
<svg style="position:absolute;left:1061px;top:881px;" width="15" height="20" viewBox="0 0 15 20"><path d="M4 1.2H13M1.5 18.8H10.5M9 1.2L5.5 18.8" fill="none" stroke="#222f3e" stroke-width="1.8"/></svg>
<svg style="position:absolute;left:1103px;top:880px;" width="17" height="21" viewBox="0 0 17 21"><path d="M2.2 0.5V8.5C2.2 12.5 4.5 14.5 8.2 14.5C12 14.5 14.2 12.5 14.2 8.5V0.5" fill="none" stroke="#222f3e" stroke-width="2.6"/><rect x="0.8" y="17.6" width="15" height="2.5" fill="#222f3e"/></svg>
<svg style="position:absolute;left:1141px;top:878.5px;" width="25" height="25" viewBox="0 0 25 25"><g fill="none" stroke="#222f3e" stroke-width="2.4" stroke-linecap="round"><path d="M10.5 6.5L13.5 3.5C15.8 1.2 19.6 1.2 21.6 3.3C23.7 5.4 23.6 9 21.4 11.2L18.4 14.2"/><path d="M14.5 18.5L11.5 21.5C9.2 23.8 5.4 23.8 3.4 21.7C1.3 19.6 1.4 16 3.6 13.8L6.6 10.8"/><path d="M9 16L16 9"/></g></svg>
<svg style="position:absolute;left:1183.5px;top:880.5px;" width="24" height="20" viewBox="0 0 24 20"><g fill="#222f3e"><rect x="0.5" y="0.6" width="22" height="2.6" rx="1"/><rect x="0.5" y="6.2" width="15" height="2.6" rx="1"/><rect x="0.5" y="11.8" width="22" height="2.6" rx="1"/><rect x="0.5" y="16.8" width="15" height="2.6" rx="1"/></g></svg>
<svg style="position:absolute;left:1226px;top:878.7px;" width="26" height="24" viewBox="0 0 26 24"><g fill="none" stroke="#222f3e" stroke-width="2.4"><rect x="1.2" y="1.2" width="22.6" height="21.6" rx="1"/><path d="M1.2 19L8.5 11.5L13 16L16.5 13L23.8 20"/></g><circle cx="9.5" cy="6.8" r="2.4" fill="#222f3e"/></svg>
<svg style="position:absolute;left:1269px;top:878.7px;" width="25" height="24" viewBox="0 0 25 24"><g fill="none" stroke="#222f3e" stroke-width="2.4"><rect x="1.2" y="1.2" width="22.6" height="21.6" rx="1"/></g><path d="M9 6.2L17.5 12L9 17.8Z" fill="#222f3e"/></svg>
<div style="position:absolute;left:1312.8px;top:888.8px;width:21px;height:2.6px;background:#222f3e;border-radius:1px"></div>
<svg style="position:absolute;left:1368.4px;top:880.3px;" width="22" height="21" viewBox="0 0 22 21"><g fill="#222f3e"><circle cx="2" cy="1.7999999999999998" r="1.9"/><rect x="7.5" y="0.5" width="14" height="2.6" rx="1"/><circle cx="2" cy="10.0" r="1.9"/><rect x="7.5" y="8.700000000000001" width="14" height="2.6" rx="1"/><circle cx="2" cy="18.200000000000003" r="1.9"/><rect x="7.5" y="16.900000000000002" width="14" height="2.6" rx="1"/></g></svg>
<svg style="position:absolute;left:1410.6px;top:880.3px;" width="21" height="21" viewBox="0 0 21 21"><g fill="#222f3e"><rect x="7" y="0.8" width="14" height="2.6" rx="1"/><rect x="7" y="8.9" width="14" height="2.6" rx="1"/><rect x="7" y="17" width="14" height="2.6" rx="1"/></g><g fill="none" stroke="#222f3e" stroke-width="1.1"><path d="M1.2 0.8L2.6 0.2V4.6M0.8 8.2C1.2 7.4 3.6 7.4 3.4 8.8C3.2 9.8 0.9 10.8 0.9 11.6H3.6M0.9 16.5H3.4L1.9 18.2C3.6 18.2 3.7 20.6 0.9 20.3"/></g></svg>
<svg style="position:absolute;left:1452.8px;top:880.3px;" width="23" height="21" viewBox="0 0 23 21"><g fill="#888"><rect x="0" y="0.6" width="22" height="2.6" rx="1"/><rect x="8.5" y="6.8" width="13.5" height="2.6" rx="1"/><rect x="8.5" y="12" width="13.5" height="2.6" rx="1"/><rect x="0" y="17.8" width="22" height="2.6" rx="1"/></g><path d="M5 6.5L1.2 10.3L5 14" fill="none" stroke="#888" stroke-width="1.6"/></svg>
<svg style="position:absolute;left:1495px;top:880.3px;" width="23" height="21" viewBox="0 0 23 21"><g fill="#222f3e"><rect x="0.8" y="0.6" width="22" height="2.6" rx="1"/><rect x="8.5" y="6.8" width="14.3" height="2.6" rx="1"/><rect x="8.5" y="12" width="14.3" height="2.6" rx="1"/><rect x="0.8" y="17.8" width="22" height="2.6" rx="1"/></g><path d="M1.2 6.5L5 10.3L1.2 14" fill="none" stroke="#222f3e" stroke-width="1.8"/></svg>
<svg style="position:absolute;left:1555px;top:879px;" width="24" height="23" viewBox="0 0 24 23"><rect x="1.3" y="1.3" width="21.4" height="20.4" rx="2.5" fill="none" stroke="#222f3e" stroke-width="2.6"/><rect x="1.3" y="1.3" width="21.4" height="4" fill="#222f3e"/><path d="M1.3 11.5H22.7M12 3V21.7" stroke="#222f3e" stroke-width="2.6"/></svg>
<svg style="position:absolute;left:1586.3px;top:886.9px;" width="14" height="9" viewBox="0 0 14 9"><path d="M1 1L7 7.4L13 1" fill="none" stroke="#8a949e" stroke-width="1.7"/></svg>
<svg style="position:absolute;left:1625.6px;top:884.4px;" width="20" height="13" viewBox="0 0 20 13"><path d="M0.5 0.5H8.5V6.5C8.5 9.5 6.5 12 3.5 12.5L3 10.5C4.6 10 5.2 8.8 5.3 7.5H0.5Z M11 0.5H19V6.5C19 9.5 17 12 14 12.5L13.5 10.5C15.1 10 15.7 8.8 15.8 7.5H11Z" fill="#222f3e"/></svg>
<svg style="position:absolute;left:1677.8px;top:878.7px;" width="23" height="23" viewBox="0 0 23 23"><path d="M6.5 1.5L1.5 6.5L6.5 11.5" fill="none" stroke="#888" stroke-width="1.8"/><path d="M1.8 6.5H13C18 6.5 21.5 10 21.5 14.5C21.5 18 20 20.8 18.5 22" fill="none" stroke="#888" stroke-width="1.8"/></svg>
<svg style="position:absolute;left:1723px;top:878.7px;" width="23" height="23" viewBox="0 0 23 23"><path d="M16 1.5L21 6.5L16 11.5" fill="none" stroke="#888" stroke-width="1.8"/><path d="M20.7 6.5H9.5C4.5 6.5 1 10 1 14.5C1 18 2.5 20.8 4 22" fill="none" stroke="#888" stroke-width="1.8"/></svg>
<svg style="position:absolute;left:1777px;top:887px;" width="23" height="6" viewBox="0 0 23 6"><g fill="#222f3e"><circle cx="2.6" cy="3" r="2.6"/><circle cx="11" cy="3" r="2.6"/><circle cx="19.4" cy="3" r="2.6"/></g></svg>
<div class="t" style="left:773.68px;top:926.82px;font-size:18.17px;font-weight:normal;font-style:normal;color:#666;transform:scaleX(0.9562);">Write your task description...</div>
<div style="position:absolute;left:1784px;top:1040px;width:73.5px;height:14px;background:#56a932;border-radius:4px 4px 0 0"></div>
<div style="position:absolute;left:720px;top:1053px;width:1178px;height:1px;background:#e6e6e6"></div>
<div style="position:absolute;left:1898px;top:88.5px;width:22px;height:965.5px;background:#f9f9f9"></div>
<div style="position:absolute;left:1898px;top:88.5px;width:1px;height:965.5px;background:#e6e6e6"></div>
<div style="position:absolute;left:1904.2px;top:89px;width:11.4px;height:485px;background:#c1c1c1"></div>
<div style="position:absolute;left:720px;top:1054px;width:1200px;height:21px;background:#f8f8f8"></div>
<div style="position:absolute;left:724px;top:1058.7px;width:1151px;height:11.6px;background:#c1c1c1;border-radius:6px"></div>
<div style="position:absolute;left:720px;top:1075px;width:1200px;height:1px;background:#e3e3e3"></div>
<div style="position:absolute;left:720px;top:1076px;width:1200px;height:4px;background:#fff"></div>
<div style="position:absolute;left:1876.7px;top:575px;width:43.3px;height:253.5px;background:#267a8f;border-radius:5px 0 0 5px;box-shadow:-2px 1px 6px rgba(0,0,0,.25)"></div>
<div style="position:absolute;left:1892.20px;top:775.01px;width:0;height:0"><div class="t" style="left:0;top:0;font-size:15.12px;font-weight:bold;color:#fff;letter-spacing:-0.074px;transform:rotate(-90deg)">PULSE SUPPORT CHAT</div></div>
<svg style="position:absolute;left:1880px;top:775px;" width="40" height="40" viewBox="0 0 40 40"><path d="M15.2 13.8H21.8Q23.5 13.8 23.5 15.5V19L25.6 22.2L23.5 23V25.5Q23.5 27.2 21.8 27.2H15.2Q13.5 27.2 13.5 25.5V15.5Q13.5 13.8 15.2 13.8Z" fill="none" stroke="#d4e6ec" stroke-width="1.2" stroke-linejoin="round"/></svg>
</body></html>
